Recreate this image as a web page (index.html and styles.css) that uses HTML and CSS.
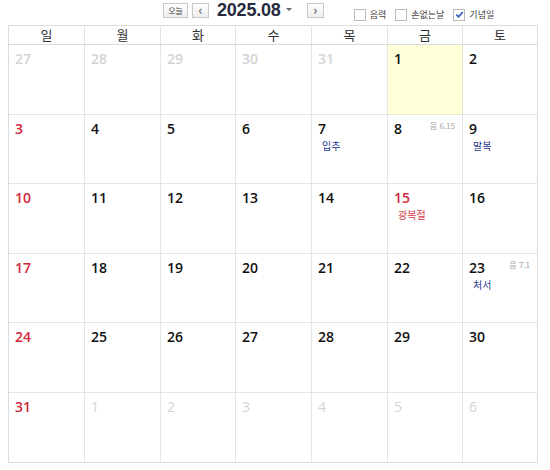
FILE: index.html
```html
<!DOCTYPE html>
<html lang="ko">
<head>
<meta charset="utf-8">
<title>달력</title>
<link rel="stylesheet" href="styles.css">
</head>
<body>
<div class="toolbar">
  <button class="btn today">오늘</button>
  <button class="btn arrow">&lsaquo;</button>
  <span class="title">2025.08</span>
  <span class="caret"></span>
  <button class="btn arrow">&rsaquo;</button>
  <label class="chk"><span class="box"></span>음력</label>
  <label class="chk"><span class="box"></span>손없는날</label>
  <label class="chk"><span class="box on"><svg viewBox="0 0 10 10" width="9" height="9"><path d="M1.5 5.2 L4 7.6 L8.6 2.2" fill="none" stroke="#2a5bb5" stroke-width="1.8"/></svg></span>기념일</label>
</div>
<div class="cal">
  <div class="dow">일</div><div class="dow">월</div><div class="dow">화</div><div class="dow">수</div><div class="dow">목</div><div class="dow">금</div><div class="dow last">토</div>

  <div class="cell"><span class="num other">27</span></div>
  <div class="cell"><span class="num other">28</span></div>
  <div class="cell"><span class="num other">29</span></div>
  <div class="cell"><span class="num other">30</span></div>
  <div class="cell"><span class="num other">31</span></div>
  <div class="cell today-cell"><span class="num">1</span></div>
  <div class="cell last"><span class="num">2</span></div>

  <div class="cell"><span class="num sun">3</span></div>
  <div class="cell"><span class="num">4</span></div>
  <div class="cell"><span class="num">5</span></div>
  <div class="cell"><span class="num">6</span></div>
  <div class="cell"><span class="num">7</span><div class="ev">입추</div></div>
  <div class="cell"><span class="num">8</span><span class="lunar">음 6.15</span></div>
  <div class="cell last"><span class="num">9</span><div class="ev">말복</div></div>

  <div class="cell"><span class="num sun">10</span></div>
  <div class="cell"><span class="num">11</span></div>
  <div class="cell"><span class="num">12</span></div>
  <div class="cell"><span class="num">13</span></div>
  <div class="cell"><span class="num">14</span></div>
  <div class="cell"><span class="num sun">15</span><div class="ev hol">광복절</div></div>
  <div class="cell last"><span class="num">16</span></div>

  <div class="cell"><span class="num sun">17</span></div>
  <div class="cell"><span class="num">18</span></div>
  <div class="cell"><span class="num">19</span></div>
  <div class="cell"><span class="num">20</span></div>
  <div class="cell"><span class="num">21</span></div>
  <div class="cell"><span class="num">22</span></div>
  <div class="cell last"><span class="num">23</span><span class="lunar">음 7.1</span><div class="ev">처서</div></div>

  <div class="cell"><span class="num sun">24</span></div>
  <div class="cell"><span class="num">25</span></div>
  <div class="cell"><span class="num">26</span></div>
  <div class="cell"><span class="num">27</span></div>
  <div class="cell"><span class="num">28</span></div>
  <div class="cell"><span class="num">29</span></div>
  <div class="cell last"><span class="num">30</span></div>

  <div class="cell bottom"><span class="num sun">31</span></div>
  <div class="cell bottom"><span class="num other thin">1</span></div>
  <div class="cell bottom"><span class="num other thin">2</span></div>
  <div class="cell bottom"><span class="num other thin">3</span></div>
  <div class="cell bottom"><span class="num other thin">4</span></div>
  <div class="cell bottom"><span class="num other thin">5</span></div>
  <div class="cell bottom last"><span class="num other thin">6</span></div>
</div>
</body>
</html>
```

FILE: styles.css
```css
* { box-sizing: border-box; }
body {
  margin: 0;
  background: #fff;
  font-family: "Noto Sans CJK KR", "Liberation Sans", sans-serif;
  color: #111;
}
.toolbar {
  height: 25px;
  display: flex;
  align-items: center;
  padding-left: 163px;
  padding-bottom: 5px;
}
.btn {
  margin: 0;
  padding: 0;
  height: 15px;
  border: 1px solid #c9c9c9;
  background: linear-gradient(#ffffff, #eeeeee);
  color: #444;
  font-family: "Noto Sans CJK KR", sans-serif;
  display: flex;
  align-items: center;
  justify-content: center;
}
.today { width: 25px; font-size: 8px; }
.arrow { width: 17px; font-size: 13px; line-height: 1; margin-left: 4px; padding-bottom: 2px; }
.title {
  margin-left: 8px;
  font-family: "Liberation Sans", Arial, sans-serif;
  font-weight: bold;
  font-size: 18px;
  color: #262a3d;
  letter-spacing: -0.2px;
}
.caret {
  width: 0; height: 0;
  margin-left: 5px;
  margin-right: 11px;
  border-left: 3px solid transparent;
  border-right: 3px solid transparent;
  border-top: 3px solid #666;
  margin-top: -2px;
}
.chk {
  display: flex;
  align-items: center;
  font-size: 9px;
  color: #444;
  margin-left: 9px;
  margin-top: 9px;
}
.chk:nth-of-type(1) { margin-left: 30px; }
.box {
  width: 12px; height: 12px;
  border: 1px solid #b9b9b9;
  background: #fff;
  margin-right: 4px;
  display: flex;
  align-items: center;
  justify-content: center;
}
.cal {
  margin-left: 8px;
  width: 530px;
  height: 438px;
  border: 1px solid #dcdcdc;
  display: grid;
  grid-template-columns: 76px 76px 75px 76px 76px 75px 1fr;
  grid-template-rows: 19px repeat(6, 1fr);
}
.dow {
  border-right: 1px solid #e3e3e3;
  border-bottom: 1px solid #dcdcdc;
  text-align: center;
  font-size: 13px;
  line-height: 18px;
  color: #333;
}
.last { border-right: none; }
.cell {
  position: relative;
  border-right: 1px solid #e6e6e6;
  border-bottom: 1px solid #e6e6e6;
  padding: 0 0 0 6px;
}
.cell.bottom { border-bottom: none; }
.cell.last { border-right: none; }
.today-cell { background: #ffffd8; border-color: #e8e6c8; }
.num {
  font-family: "Open Sans", "Liberation Sans", sans-serif;
  font-size: 14px;
  font-weight: 600;
  line-height: 17px;
  color: #111;
}
.num.sun { color: #d1283b; }
.num.other { color: #d3d3d3; }
.num.thin { font-weight: 400; }
.lunar {
  position: absolute;
  top: 5px;
  right: 7px;
  font-size: 8px;
  color: #a6a6a6;
  font-family: "Noto Sans CJK KR", sans-serif;
}
.ev {
  font-size: 10px;
  line-height: 14px;
  margin-left: 4px;
  margin-top: 0;
  color: #1d3a8f;
}
.ev.hol { color: #d6394a; }
```
